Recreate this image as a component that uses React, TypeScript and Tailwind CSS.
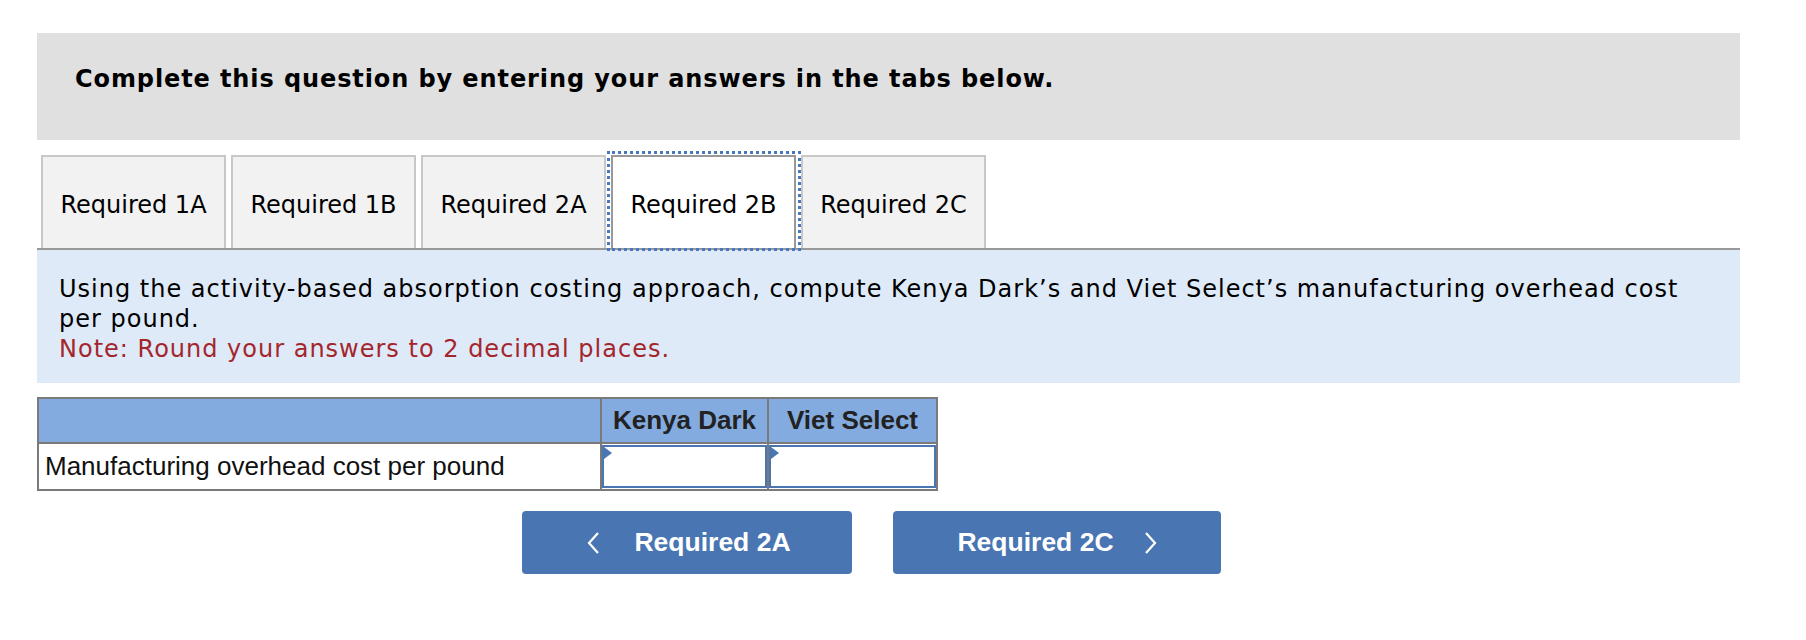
import React from "react";

const verdana = { fontFamily: '"DejaVu Sans", Verdana, sans-serif' };

function Tab({ label, active }: { label: string; active?: boolean }) {
  if (active) {
    return (
      <div className="relative h-[93px] w-[185px]">
        <div className="absolute -left-[4px] -right-[5px] -top-[4px] -bottom-[3px] border-[3px] border-dotted border-[#4a78c0]" />
        <div className="flex h-full w-full items-center justify-center border-2 border-b-0 border-[#999] bg-white pt-[5px] text-[24px] text-black">
          {label}
        </div>
      </div>
    );
  }
  return (
    <div className="flex h-[93px] w-[185px] items-center justify-center border-2 border-b-0 border-[#c8c8c8] bg-[#f2f2f2] pt-[5px] text-[24px] text-black">
      {label}
    </div>
  );
}

function InputCell() {
  return (
    <td className="border-2 border-[#7a7a7a] p-0">
      <div className="relative h-[43px] w-full border-2 border-[#4a76b4] bg-white">
        <div className="absolute left-0 top-0 h-0 w-0 border-y-[6px] border-l-[8px] border-y-transparent border-l-[#4a76b4]" />
      </div>
    </td>
  );
}

export default function App() {
  return (
    <div className="min-h-[640px] w-[1806px] bg-white pl-[37px] pt-[33px]" style={verdana}>
      <div className="w-[1703px]">
        <div className="h-[107px] bg-[#e0e0e0] pl-[38px] pt-[32px]">
          <div className="text-[24px] font-bold leading-[28px] tracking-[0.9px] text-black">
            Complete this question by entering your answers in the tabs below.
          </div>
        </div>

        <div className="mt-[15px] flex gap-[5px] pl-[4px]">
          <Tab label="Required 1A" />
          <Tab label="Required 1B" />
          <Tab label="Required 2A" />
          <Tab label="Required 2B" active />
          <Tab label="Required 2C" />
        </div>
        <div className="h-[2px] bg-[#999]" />

        <div className="bg-[#deeaf7] pb-[19px] pl-[22px] pr-[40px] pt-[24px] text-[24px] leading-[30px] tracking-[1px]">
          <div className="text-black">
            Using the activity-based absorption costing approach, compute Kenya Dark’s and Viet Select’s manufacturing overhead cost per pound.
          </div>
          <div className="text-[#a4262c]">Note: Round your answers to 2 decimal places.</div>
        </div>

        <table
          className="mt-[14px] border-collapse border-2 border-[#7a7a7a]"
          style={{ fontFamily: '"Liberation Sans", Arial, sans-serif' }}
        >
          <thead>
            <tr className="h-[45px] bg-[#84abdf]">
              <th className="w-[563px] border-2 border-[#7a7a7a]" />
              <th className="w-[167px] border-2 border-[#7a7a7a] text-center text-[26px] font-bold text-[#222]">
                Kenya Dark
              </th>
              <th className="w-[169px] border-2 border-[#7a7a7a] text-center text-[26px] font-bold text-[#222]">
                Viet Select
              </th>
            </tr>
          </thead>
          <tbody>
            <tr className="h-[47px]">
              <td className="border-2 border-[#7a7a7a] pl-[6px] text-left text-[26px] text-[#111]">
                Manufacturing overhead cost per pound
              </td>
              <InputCell />
              <InputCell />
            </tr>
          </tbody>
        </table>

        <div
          className="ml-[485px] mt-[20px] flex gap-[41px]"
          style={{ fontFamily: '"Liberation Sans", Arial, sans-serif' }}
        >
          <button className="flex h-[63px] w-[330px] items-center justify-center gap-[34px] rounded-[4px] bg-[#4a75b3] pl-[4px] text-[26.5px] font-bold text-white">
            <svg width="13" height="24" viewBox="0 0 13 24" fill="none">
              <path d="M11 2 L2 12 L11 22" stroke="white" strokeWidth="2.2" />
            </svg>
            <span>Required 2A</span>
          </button>
          <button className="flex h-[63px] w-[328px] items-center justify-center gap-[30px] rounded-[4px] bg-[#4a75b3] text-[26.5px] font-bold text-white">
            <span>Required 2C</span>
            <svg width="13" height="24" viewBox="0 0 13 24" fill="none">
              <path d="M2 2 L11 12 L2 22" stroke="white" strokeWidth="2.2" />
            </svg>
          </button>
        </div>
      </div>
    </div>
  );
}
